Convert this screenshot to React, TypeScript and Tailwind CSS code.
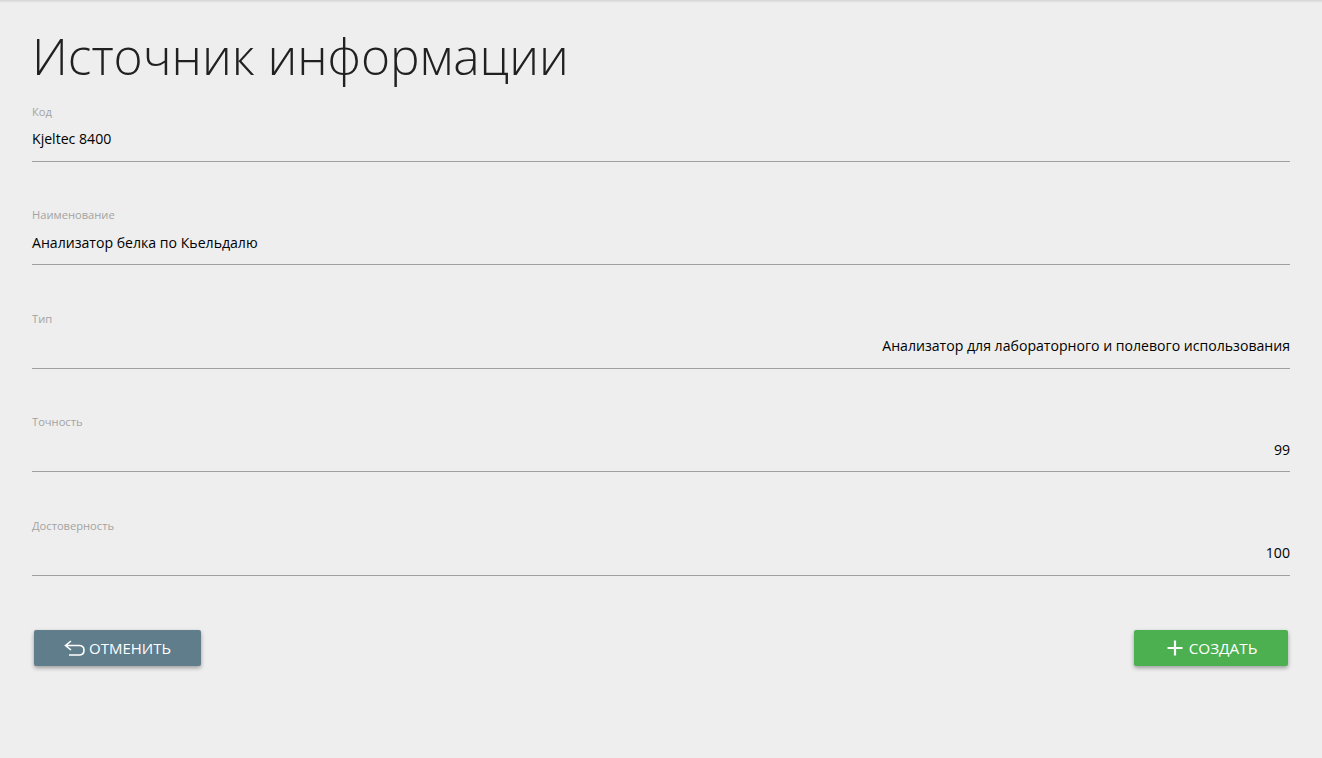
import React from "react";

function Field({ label, value, right }: { label: string; value: string; right?: boolean }) {
  return (
    <div className="mb-[45.5px] flex h-[58px] flex-col border-b border-[#a0a0a0]">
      <div className="h-[16px] text-[11.15px] leading-[16px] text-[#a3a3a3]">{label}</div>
      <div className={`mt-[9.25px] text-[14.1px] leading-[20px] text-black ${right ? "text-right" : "text-left"}`}>{value}</div>
    </div>
  );
}

export default function App() {
  return (
    <div className="min-h-[758px] bg-[#eeeeee] px-[32px] font-['Open_Sans','Noto_Sans',sans-serif]">
      <div className="absolute left-0 right-0 top-0 h-[3px] bg-gradient-to-b from-[#d4d4d4] to-[#eeeeee]" />
      <h1 className="pt-[22px] pb-[13.75px] text-[49.7px] font-light leading-[68px] text-[#212121]">Источник информации</h1>
      <Field label="Код" value="Kjeltec 8400" />
      <Field label="Наименование" value="Анализатор белка по Кьельдалю" />
      <Field label="Тип" value="Анализатор для лабораторного и полевого использования" right />
      <Field label="Точность" value="99" right />
      <Field label="Достоверность" value="100" right />
      <div className="mt-[54.25px] flex justify-between px-[2px]">
        <button className="flex h-[36px] w-[167px] items-center justify-center rounded-[2px] bg-[#607d8b] text-[15px] text-white shadow-[0_2px_4px_rgba(0,0,0,0.35)]">
          <svg width="21" height="18" viewBox="0 0 21 18" fill="none" stroke="white" strokeWidth="1.6" className="mr-[4px]">
            <path d="M7 2 L1.5 6.5 L7 11 M1.5 6.5 H15 Q20 6.5 20 11.2 Q20 16 15 16 H5" />
          </svg>
          ОТМЕНИТЬ
        </button>
        <button className="flex h-[36px] w-[154px] items-center justify-center rounded-[2px] bg-[#4caf50] pl-[2px] text-[15.3px] text-white shadow-[0_2px_4px_rgba(0,0,0,0.35)]">
          <svg width="16" height="16" viewBox="0 0 16 16" fill="none" stroke="white" strokeWidth="2.2" className="mr-[6px]">
            <path d="M8 .5 V15.5 M.5 8 H15.5" />
          </svg>
          СОЗДАТЬ
        </button>
      </div>
    </div>
  );
}
